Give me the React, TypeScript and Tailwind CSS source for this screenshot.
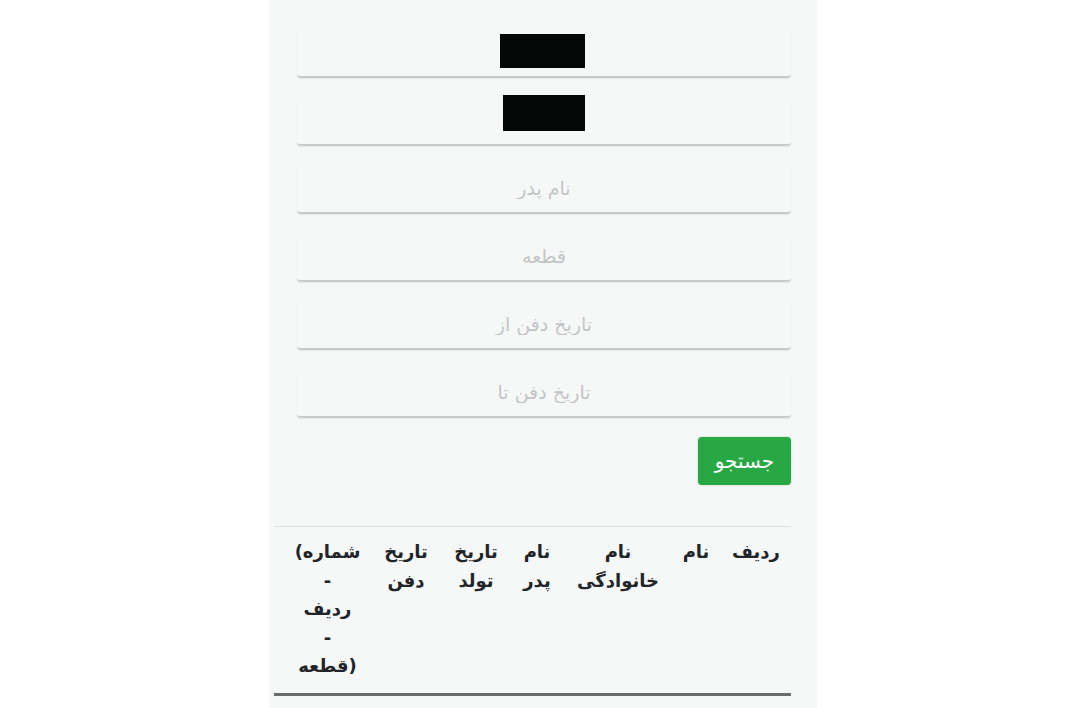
import React from "react";

const fields = [
  { placeholder: "نام", size: "text-[19px]", redacted: "w-[85px] h-[34px] -mt-[4px] mr-[4px]" },
  { placeholder: "نام خانوادگی", size: "text-[16px]", redacted: "w-[82px] h-[36px] -mt-[16px]" },
  { placeholder: "نام پدر", size: "text-[19px]" },
  { placeholder: "قطعه", size: "text-[19px]" },
  { placeholder: "تاریخ دفن از", size: "text-[19px]" },
  { placeholder: "تاریخ دفن تا", size: "text-[19px]" },
];

const columns = [
  { w: "w-[70px]", lines: ["ردیف"] },
  { w: "w-[50px]", lines: ["نام"] },
  { w: "w-[106px]", lines: ["نام", "خانوادگی"] },
  { w: "w-[56px]", lines: ["نام", "پدر"] },
  { w: "w-[66px]", lines: ["تاریخ", "تولد"] },
  { w: "w-[74px]", lines: ["تاریخ", "دفن"] },
];

export default function App() {
  return (
    <div className="min-h-screen bg-white font-['DejaVu_Sans',sans-serif]">
      <div dir="rtl" className="ml-[269px] w-[548px] min-h-screen bg-[#f6f8f8] pr-[26px] pl-[28px] pt-[28px]">
        <form className="flex flex-col">
          {fields.map((f, i) => (
            <div key={i} className="relative mb-[18px]">
              <input
                type="text"
                placeholder={f.placeholder}
                className={`w-full h-[50px] bg-transparent text-center ${f.size} text-[#495057] placeholder:text-[#c3c5c5] border-b-2 border-[#c8caca] rounded-[4px] shadow-[0_1px_2px_rgba(0,0,0,0.06)] outline-none`}
              />
              {f.redacted && (
                <div className="absolute inset-0 flex items-center justify-center pointer-events-none">
                  <div className={`bg-[#050606] ${f.redacted}`} />
                </div>
              )}
            </div>
          ))}
          <div className="pt-[1px]">
            <button
              type="button"
              className="w-[93px] h-[48px] bg-[#28a745] text-white text-[20px] rounded-[4px] shadow-[0_0_2px_rgba(40,167,69,0.4)]"
            >
              جستجو
            </button>
          </div>
        </form>

        <div className="mt-[41px] w-[517px]">
          <table className="w-[517px] border-collapse table-fixed">
            <thead>
              <tr className="border-t border-[#dee2e6] border-b-[3px] border-b-[#6a6d70]">
                {columns.map((c, i) => (
                  <th
                    key={i}
                    className={`${c.w} align-top text-center font-bold text-[18px] leading-[28.5px] text-[#212529] pt-[11px] pb-[12px] px-0`}
                  >
                    {c.lines.map((l, j) => (
                      <div key={j}>{l}</div>
                    ))}
                  </th>
                ))}
                <th className="w-[95px] align-top text-center font-bold text-[18px] leading-[28.5px] text-[#212529] pt-[11px] pb-[12px] px-0 pl-[12px]">
                  <div dir="ltr" className="flex justify-center">
                    <span>(</span>
                    <span dir="rtl">شماره</span>
                  </div>
                  <div>-</div>
                  <div>ردیف</div>
                  <div>-</div>
                  <div dir="ltr" className="flex justify-center">
                    <span dir="rtl">قطعه</span>
                    <span>)</span>
                  </div>
                </th>
              </tr>
            </thead>
            <tbody />
          </table>
        </div>
      </div>
    </div>
  );
}
